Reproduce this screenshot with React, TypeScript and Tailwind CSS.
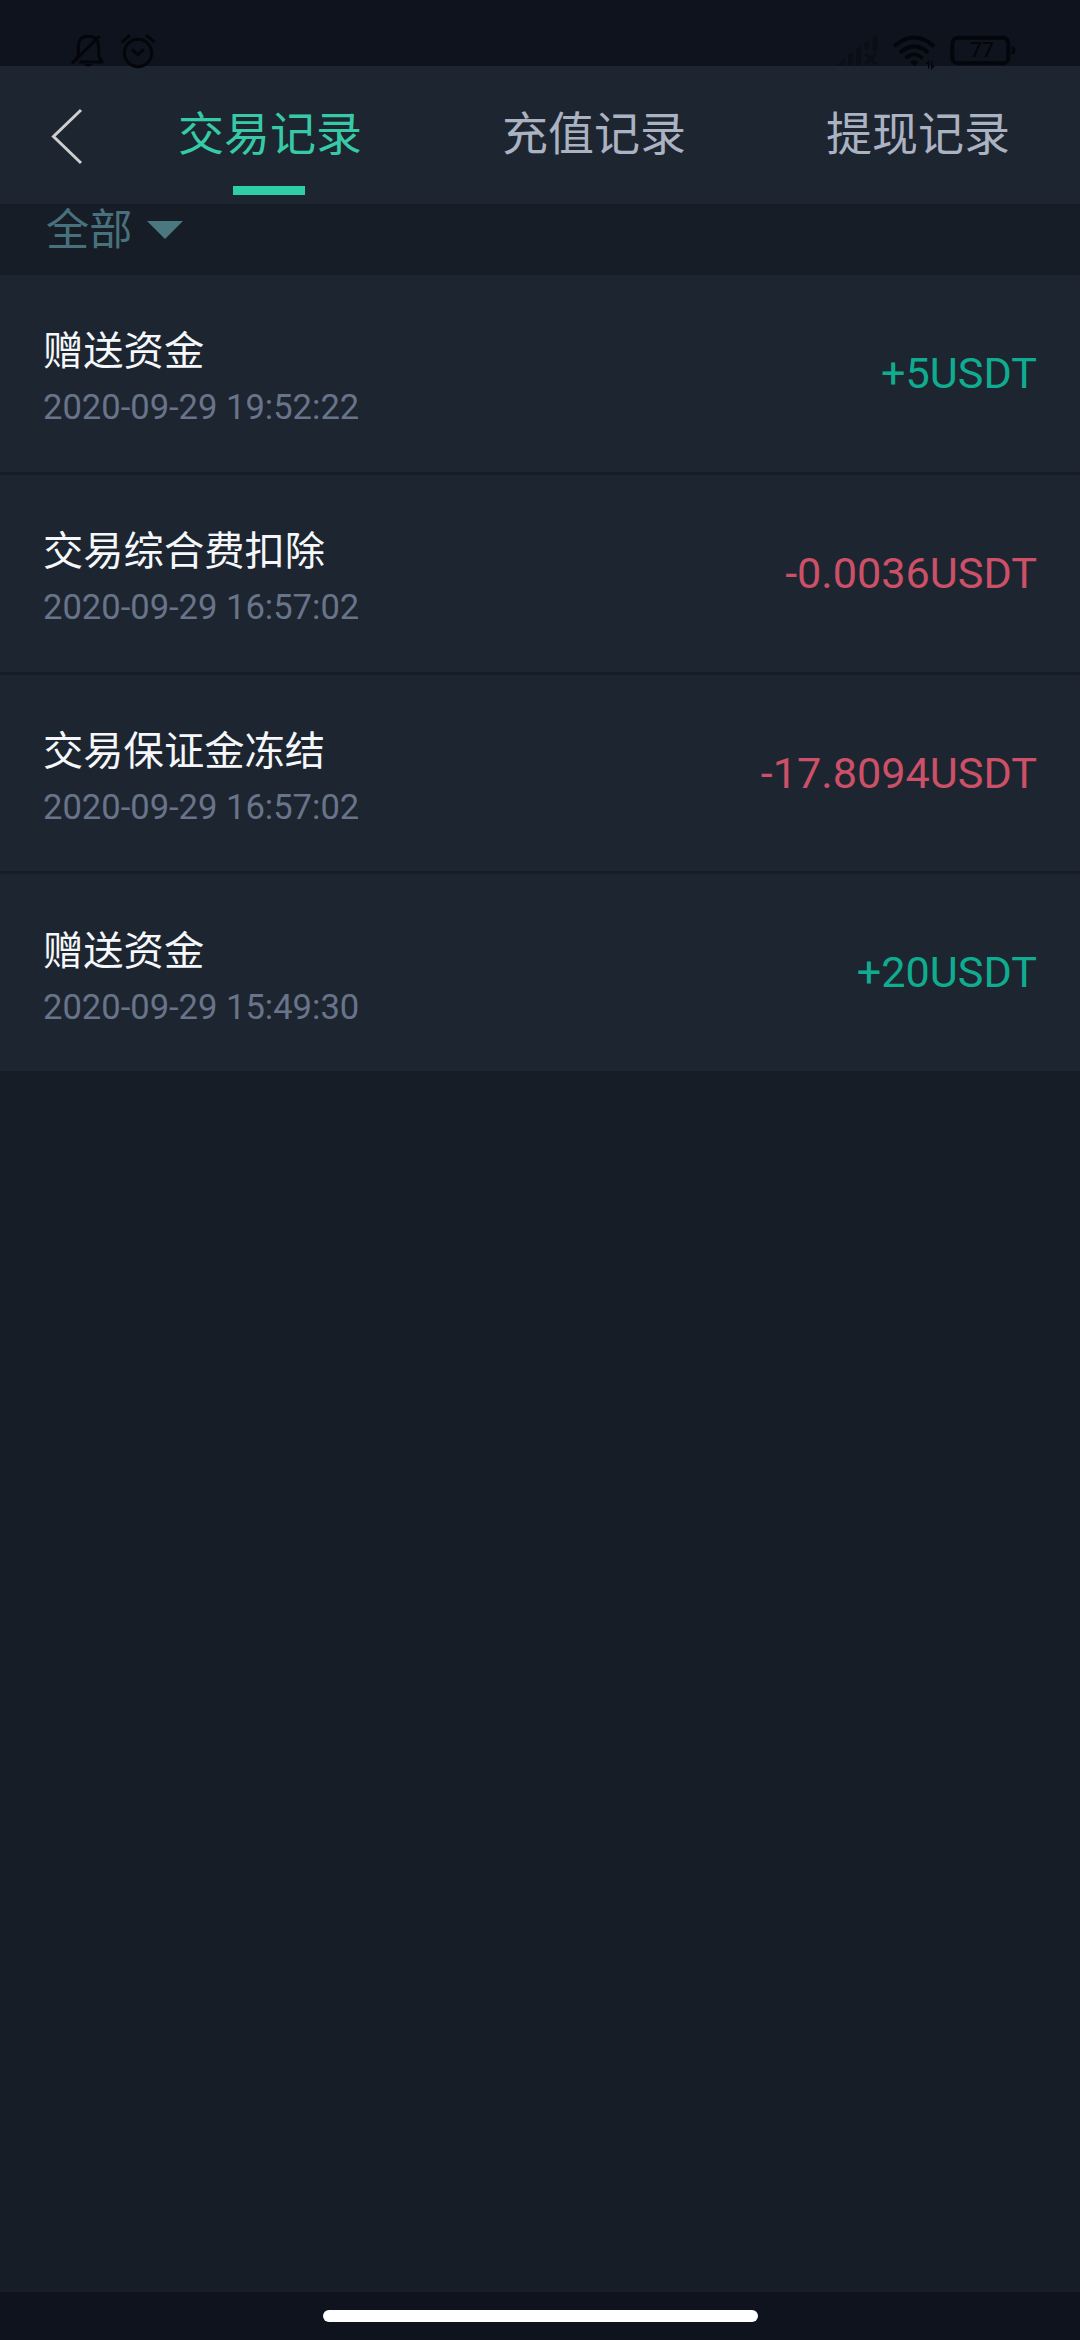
import React, { useState } from "react";
import clsx from "clsx";

interface TradeRecord {
    id: number;
    title: string;
    time: string;
    amount: string;
    income: boolean;
}

const TABS = ["交易记录", "充值记录", "提现记录"];

const RECORDS: TradeRecord[] = [
    { id: 1, title: "赠送资金", time: "2020-09-29 19:52:22", amount: "+5USDT", income: true },
    { id: 2, title: "交易综合费扣除", time: "2020-09-29 16:57:02", amount: "-0.0036USDT", income: false },
    { id: 3, title: "交易保证金冻结", time: "2020-09-29 16:57:02", amount: "-17.8094USDT", income: false },
    { id: 4, title: "赠送资金", time: "2020-09-29 15:49:30", amount: "+20USDT", income: true },
];

function StatusBar() {
    return (
        <div className="relative z-10 flex h-[66px] shrink-0 justify-between bg-[#0f131d] pt-5 pr-10 pl-10">
            <svg className="h-[60px] w-[160px] shrink-0" viewBox="0 0 480 180" fill="none" stroke="#04060b" strokeWidth="9">
                {/* muted bell */}
                <path d="M118 126H186L176 108V82Q176 49 144 49Q115 49 115 82V106L106 122" strokeLinejoin="round" />
                <path d="M96 130L179 48" />
                <path d="M131 132Q145 147 159 132Z" fill="#04060b" stroke="none" />
                {/* alarm clock */}
                <circle cx="294" cy="99" r="41" />
                <path d="M276 88L293 104L312 88" />
                <path d="M245 67L270 45M318 45L344 67" />
            </svg>
            <svg className="h-[60px] w-[220px] shrink-0" viewBox="0 0 660 180" fill="none" stroke="#04060b">
                {/* signal bars, no service */}
                <g fill="#0b0e17" stroke="none">
                    <path d="M50 135L74 115V135Z" />
                    <path d="M84 107L98 97V135H84Z" />
                    <path d="M108 88L123 77V135H108Z" />
                    <path d="M133 69L147 63V88H133Z" />
                    <path d="M158 53L172 47V92H158Z" />
                </g>
                <path d="M137 101L167 133M167 101L137 133" stroke="#0b0e17" strokeWidth="9" />
                {/* wifi */}
                <path d="M223 79Q282 26 342 79" strokeWidth="12" />
                <path d="M240 98Q282 60 325 98" strokeWidth="12" />
                <path d="M257 115Q282 91 308 115" strokeWidth="11" />
                <path d="M270 126Q283 116 296 126L283 139Z" fill="#04060b" stroke="none" />
                <path d="M318 133L326 125V146M343 137L335 145V123" strokeWidth="4" />
                {/* battery */}
                <rect x="397" y="53" width="168" height="77" rx="17" strokeWidth="12" />
                <path d="M575 79Q586 79 586 91Q586 104 575 104Z" fill="#04060b" stroke="none" />
                <text x="486" y="112" textAnchor="middle" fill="#04060b" stroke="none" className="font-['Roboto',sans-serif] text-[63px] font-medium">
                    77
                </text>
            </svg>
        </div>
    );
}

function RecordRow({ record }: { record: TradeRecord }) {
    return (
        <li className="group flex h-[197px] items-start justify-between bg-[#1d2630] px-[43px] nth-3:h-[196px]">
            <div className="pt-12 group-last:pt-[49px]">
                <p className="text-[40.3px] leading-[57px] text-[#f5f7fa]">{record.title}</p>
                <p className="text-[34.56px] leading-[55px] text-[#69748a]">{record.time}</p>
            </div>
            <span className={clsx("pt-[68.5px] text-[43.2px] leading-[60px]", record.income ? "text-[#10ac90]" : "text-[#cc5067]")}>
                {record.amount}
            </span>
        </li>
    );
}

function App() {
    const [activeTab, setActiveTab] = useState(0);

    return (
        <div className="flex h-[2340px] w-[1080px] flex-col overflow-hidden bg-[#161d26] font-['Roboto','Noto_Sans_CJK_SC',sans-serif]" lang="zh-CN">
            <StatusBar />

            <header className="flex h-[138px] shrink-0 bg-[#1d2630]">
                <button type="button" aria-label="返回" className="flex w-[108px] shrink-0 items-center pl-12">
                    <svg className="h-[60px] w-10" viewBox="0 0 40 60" fill="none" stroke="#cecece" strokeWidth="3">
                        <path d="M33 5L5.5 31.5L33 58" />
                    </svg>
                </button>
                {TABS.map((tab, index) => (
                    <button
                        key={tab}
                        type="button"
                        onClick={() => setActiveTab(index)}
                        className={clsx(
                            "flex w-[324px] flex-col items-center pt-[38px] text-[46px] leading-[60px]",
                            index === activeTab ? "text-[#36cba6]" : "text-[#abb2c2]"
                        )}
                    >
                        {tab}
                        {index === activeTab && <span className="mt-[22px] mr-0.5 h-[9px] w-[72px] bg-[#2fcea8]" />}
                    </button>
                ))}
            </header>

            <div className="flex h-[71px] shrink-0 items-start pl-[46px]">
                <button type="button" className="flex items-center gap-[15px] text-[43.2px] leading-[53px] text-[#49717b]">
                    全部
                    <svg className="mb-px h-[18px] w-9" viewBox="0 0 36 18" fill="#4b7780">
                        <path d="M0 0H36L18 18Z" />
                    </svg>
                </button>
            </div>

            <ul className="flex flex-col gap-[3px]">
                {RECORDS.map(record => (
                    <RecordRow key={record.id} record={record} />
                ))}
            </ul>

            {/* system gesture bar */}
            <div className="mt-auto flex h-12 shrink-0 items-center justify-center bg-[#0f131d]">
                <div className="h-3 w-[435px] rounded-full bg-white" />
            </div>
        </div>
    );
}

export default App;
